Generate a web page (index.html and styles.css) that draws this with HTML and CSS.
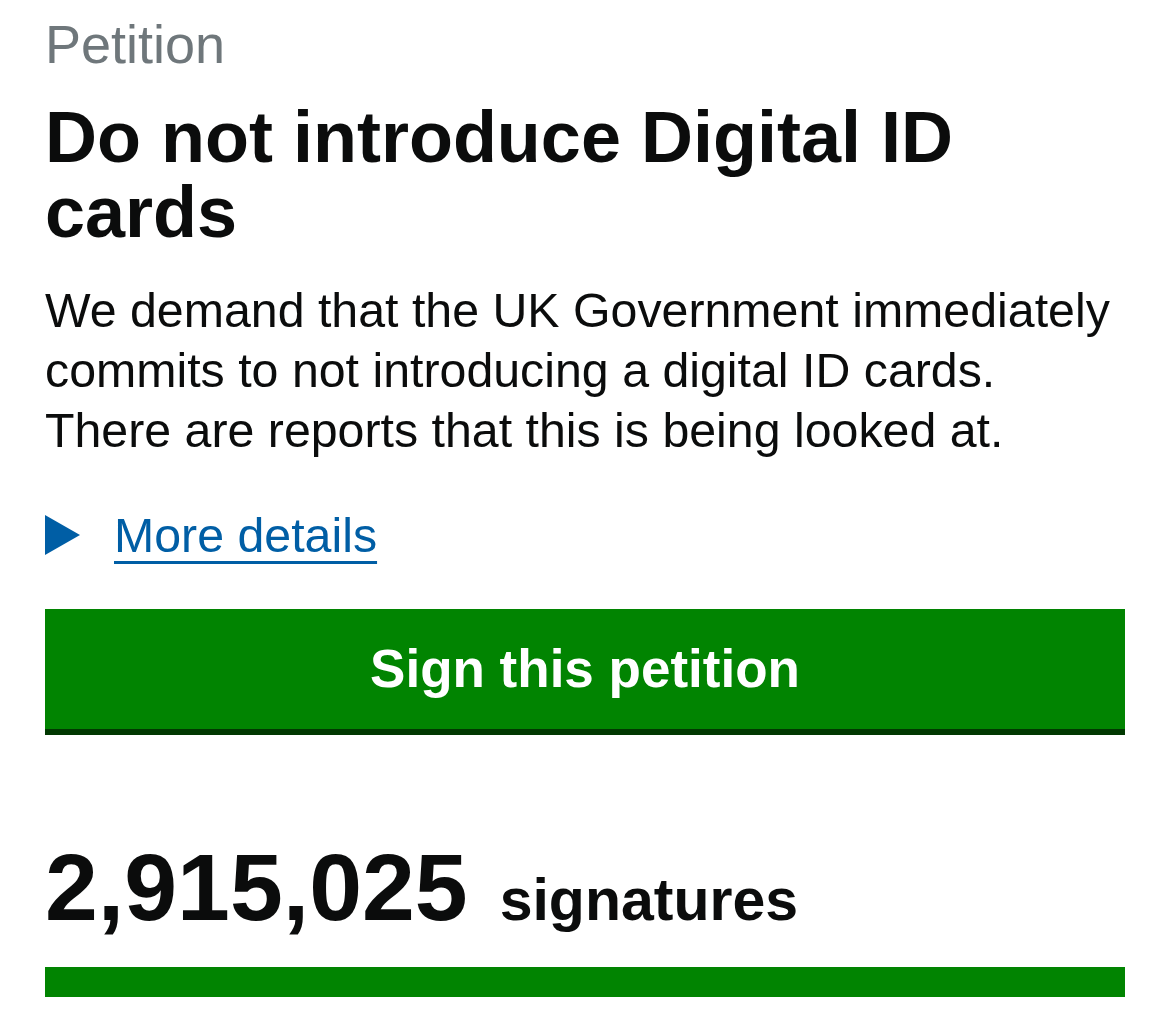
FILE: index.html
```html
<!DOCTYPE html>
<html lang="en">
<head>
<meta charset="utf-8">
<title>Do not introduce Digital ID cards - Petitions</title>
<link rel="stylesheet" href="styles.css">
</head>
<body>
<main class="page">
  <span class="caption">Petition</span>
  <h1 class="title">Do not introduce Digital ID cards</h1>
  <p class="summary">We demand that the UK Government immediately commits to not introducing a digital ID cards. There are reports that this is being looked at.</p>
  <div class="details">
    <span class="arrow"></span>
    <a class="details-link" href="#">More details</a>
  </div>
  <a class="sign-button" href="#">Sign this petition</a>
  <div class="count">
    <span class="count-number">2,915,025</span>
    <span class="count-label">signatures</span>
  </div>
  <div class="progress"><div class="progress-fill" style="width: 100%"></div></div>
</main>
</body>
</html>
```
FILE: styles.css
```css
html, body {
  margin: 0;
  padding: 0;
  background: #ffffff;
}

body {
  font-family: "Liberation Sans", Arial, Helvetica, sans-serif;
  color: #0b0c0c;
}

.page {
  width: 1080px;
  padding: 14px 45px 0 45px;
  display: flex;
  flex-direction: column;
  align-items: flex-start;
}

.caption {
  display: block;
  font-size: 54px;
  line-height: 60px;
  color: #6f777b;
}

.title {
  margin: 26px 0 0 0;
  font-size: 72px;
  line-height: 75px;
  font-weight: 700;
}

.summary {
  margin: 30px 0 0 0;
  font-size: 48.3px;
  line-height: 60px;
}

.details {
  margin-top: 45px;
  display: flex;
  align-items: center;
  gap: 34px;
  height: 60px;
}

.arrow {
  width: 0;
  height: 0;
  border-top: 20px solid transparent;
  border-bottom: 20px solid transparent;
  border-left: 35px solid #005ea5;
}

.details-link {
  font-size: 48.3px;
  line-height: 60px;
  color: #005ea5;
  text-decoration: underline;
  text-decoration-thickness: 3px;
  text-underline-offset: 9px;
}

.sign-button {
  margin-top: 44px;
  width: 1080px;
  height: 120px;
  line-height: 120px;
  background: #018401;
  box-shadow: 0 6px 0 #013801;
  color: #ffffff;
  font-size: 53px;
  font-weight: 700;
  text-align: center;
  text-decoration: none;
}

.count {
  margin-top: 113px;
  display: flex;
  align-items: baseline;
  gap: 32px;
  line-height: 90px;
}

.count-number {
  font-size: 95px;
  font-weight: 700;
}

.count-label {
  font-size: 59px;
  font-weight: 700;
}

.progress {
  margin-top: 22px;
  width: 1080px;
  height: 30px;
  background: #ffffff;
}

.progress-fill {
  height: 100%;
  background: #018401;
}
```
